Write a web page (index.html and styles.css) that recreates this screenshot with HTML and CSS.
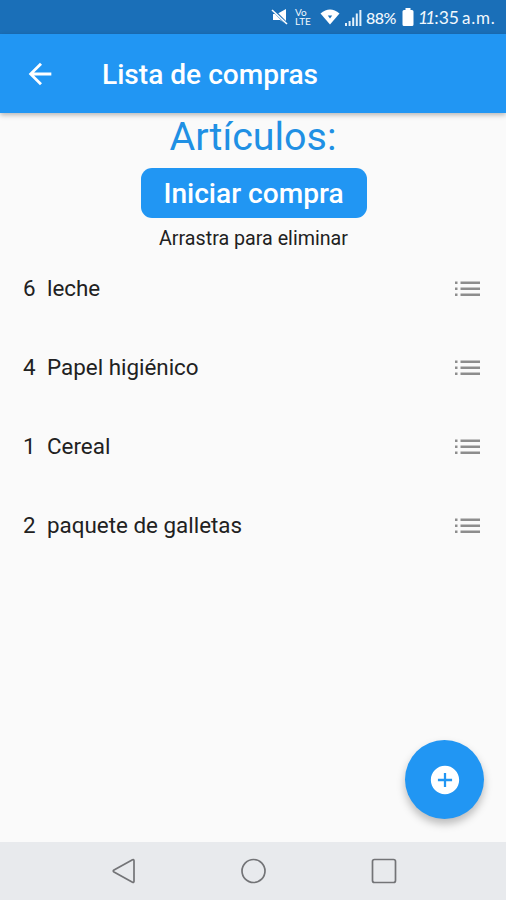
FILE: index.html
```html
<!DOCTYPE html>
<html lang="es">
<head>
<meta charset="utf-8">
<title>Lista de compras</title>
<link rel="stylesheet" href="styles.css">
</head>
<body>
<div class="screen">
  <div class="status">
    <svg class="mute" width="18" height="18" viewBox="0 0 18 18"><path d="M2 6h4l9-5v15l-6-4H2z" fill="#fff"/><path d="M0 0l17 17" stroke="#1a6fb8" stroke-width="3"/><path d="M1 2l15 14" stroke="#fff" stroke-width="1.600"/></svg>
    <div class="volte"><span>Vo</span><span>LTE</span></div>
    <svg class="wifi" width="20" height="16" viewBox="0 0 20 16"><path d="M0.5 4.500Q10-3.500 19.500 4.500L10 15.500z" fill="#fff"/><path d="M7.800 6.500h4.400L10 9.500z" fill="#1a6fb8"/></svg>
    <svg class="signal" width="17" height="17" viewBox="0 0 17 17"><path d="M0 14h2v3H0zM3.600 12h2v5h-2zM7.200 8.500h2V17h-2zM10.800 4.500h2V17h-2zM14.400 1h2v16h-2z" fill="#e4f1fb"/></svg>
    <span class="percent">88%</span>
    <svg class="battery" width="12" height="18" viewBox="0 0 12 18"><path d="M3.500 0h5v2H10q1.500 0 1.500 1.500v13Q11.500 18 10 18H2Q.5 18 .5 16.500v-13Q.5 2 2 2h1.500z" fill="#fff"/></svg>
    <span class="clock"><i>11</i>:35</span><span class="ampm">a.m.</span>
  </div>
  <header class="appbar">
    <svg class="back" width="34" height="34" viewBox="0 0 24 24"><path d="M20 11H7.830l5.590-5.590L12 4l-8 8 8 8 1.410-1.410L7.830 13H20v-2z" fill="#fff"/></svg>
    <h1>Lista de compras</h1>
  </header>
  <main>
    <h2>Artículos:</h2>
    <button class="start">Iniciar compra</button>
    <p class="hint">Arrastra para eliminar</p>
    <ul class="items">
      <li><span class="qty">6</span><span class="name">leche</span><svg class="handle" width="25" height="16" viewBox="0 0 25 16"><path d="M0 .5h2.500v2.500H0zM5.500 .5H25v2.500H5.500zM0 6.500h2.500V9H0zM5.500 6.500H25V9H5.500zM0 12.500h2.500V15H0zM5.500 12.500H25V15H5.500z"/></svg></li>
      <li><span class="qty">4</span><span class="name">Papel higiénico</span><svg class="handle" width="25" height="16" viewBox="0 0 25 16"><path d="M0 .5h2.500v2.500H0zM5.500 .5H25v2.500H5.500zM0 6.500h2.500V9H0zM5.500 6.500H25V9H5.500zM0 12.500h2.500V15H0zM5.500 12.500H25V15H5.500z"/></svg></li>
      <li><span class="qty">1</span><span class="name">Cereal</span><svg class="handle" width="25" height="16" viewBox="0 0 25 16"><path d="M0 .5h2.500v2.500H0zM5.500 .5H25v2.500H5.500zM0 6.500h2.500V9H0zM5.500 6.500H25V9H5.500zM0 12.500h2.500V15H0zM5.500 12.500H25V15H5.500z"/></svg></li>
      <li><span class="qty">2</span><span class="name">paquete de galletas</span><svg class="handle" width="25" height="16" viewBox="0 0 25 16"><path d="M0 .5h2.500v2.500H0zM5.500 .5H25v2.500H5.500zM0 6.500h2.500V9H0zM5.500 6.500H25V9H5.500zM0 12.500h2.500V15H0zM5.500 12.500H25V15H5.500z"/></svg></li>
    </ul>
  </main>
  <button class="fab" aria-label="Agregar"><svg width="34" height="34" viewBox="0 0 24 24"><path d="M12 2C6.480 2 2 6.480 2 12s4.480 10 10 10 10-4.480 10-10S17.520 2 12 2zm5 10.800h-4.200v4.200h-1.600v-4.200H7v-1.600h4.200V7h1.600v4.200H17v1.600z" fill="#fff"/></svg></button>
  <nav class="navbar">
    <svg width="26" height="28" viewBox="0 0 26 28"><path d="M21.500 2.800Q23 2 23 3.700v20.600q0 1.700-1.500.9L3 15q-1.500-1 0-2z"/></svg>
    <svg width="26" height="28" viewBox="0 0 26 28"><circle cx="12.500" cy="14" r="11.500"/></svg>
    <svg width="26" height="28" viewBox="0 0 26 28"><rect x="1.500" y="2.500" width="23" height="23" rx="2"/></svg>
  </nav>
</div>
</body>
</html>
```
FILE: styles.css
```css
* { box-sizing: border-box; }
body { margin: 0; font-family: Roboto, sans-serif; color: #212121; }
.screen { position: relative; width: 506px; height: 900px; display: flex; flex-direction: column; background: #fafafa; overflow: hidden; }
.status { height: 34px; flex: none; display: flex; align-items: center; padding-left: 271px; background: #1a6fb8; color: #f2f8fd; font-family: Lato, sans-serif; white-space: nowrap; }
.status svg { flex: none; }
.volte { width: 19px; margin-left: 6px; display: flex; flex-direction: column; font-size: 10px; line-height: 9.500px; font-weight: 400; }
.volte span { height: 9.500px; }
.wifi { margin-left: 6px; }
.signal { margin-left: 5px; }
.percent { width: 31px; margin-left: 4px; font-size: 16px; font-weight: 500; letter-spacing: -0.5px; }
.battery { margin-left: 5px; }
.clock { width: 38px; margin-left: 4px; font-size: 17.500px; }
.clock i { letter-spacing: -3px; margin-right: 2px; }
.ampm { margin-left: 6px; font-size: 17px; letter-spacing: 0.8px; }
.appbar { position: relative; height: 79px; flex: none; display: flex; align-items: center; padding-left: 23px; background: #2196f3; box-shadow: 0 2px 5px rgba(0,0,0,.28); color: #fff; }
h1 { margin: 2px 0 0 45px; font-size: 28.100px; line-height: 34px; font-weight: 500; }
main { flex: 1; display: flex; flex-direction: column; align-items: center; }
h2 { margin: 0; padding-top: 1px; height: 55px; font-size: 39.400px; line-height: 46px; font-weight: 400; color: #2090e4; }
.start { width: 226px; height: 50px; margin-left: 1px; padding: 2px 0 0; border: 0; border-radius: 11px; background: #2196f3; color: #fff; font: 500 28.100px/48px Roboto, sans-serif; }
.hint { margin: 9px 0 0 1px; font-size: 19.700px; line-height: 24px; }
.items { width: 100%; margin: -1px 0 0; padding: 0; list-style: none; }
.items li { height: 78.750px; display: flex; align-items: center; padding: 0 26px 0 23px; font-size: 22.400px; }
.qty { width: 24px; margin-bottom: 2px; }
.name { flex: 1; margin-bottom: 2px; }
.handle { fill: #8d8d8d; }
.fab { position: absolute; left: 405px; top: 740px; width: 79px; height: 79px; padding: 0; border: 0; border-radius: 50%; display: flex; align-items: center; justify-content: center; background: #2196f3; box-shadow: 0 5px 9px rgba(0,0,0,.26); }
.navbar { height: 58px; flex: none; display: flex; justify-content: space-between; align-items: center; padding: 0 109px 0 111px; background: #e8eaed; }
.navbar svg { fill: none; stroke: #737477; stroke-width: 1.700; }
```
